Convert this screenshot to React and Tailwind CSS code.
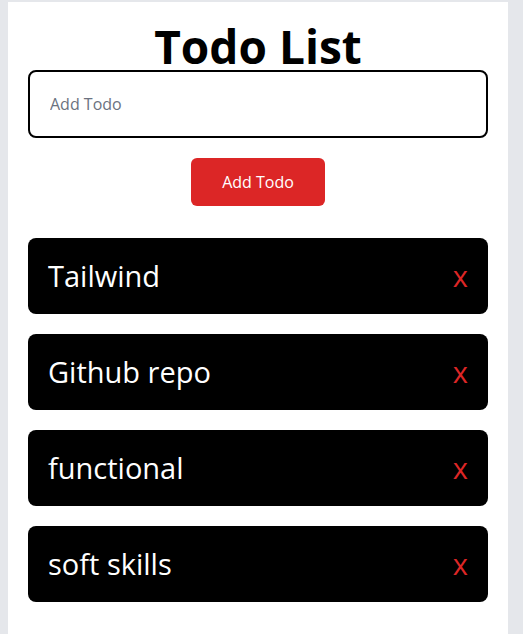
import { useState } from "react";

const initialTodos = ["Tailwind", "Github repo", "functional", "soft skills"];

export default function App() {
  const [todos, setTodos] = useState(initialTodos);
  const [text, setText] = useState("");

  const addTodo = () => {
    if (!text.trim()) return;
    setTodos((prev) => [...prev, text.trim()]);
    setText("");
  };

  const removeTodo = (idx) => {
    setTodos((prev) => prev.filter((_, i) => i !== idx));
  };

  return (
    <div className="min-h-screen bg-[#e5e7eb] pt-0.5 pl-2 font-['Open_Sans',sans-serif]">
      <div className="w-[500px] min-h-[632px] bg-white p-5">
        {/* Header */}
        <h1 className="text-center text-[46px] leading-[48px] font-bold text-black">Todo List</h1>

        {/* Input */}
        <input
          value={text}
          onChange={(e) => setText(e.target.value)}
          placeholder="Add Todo"
          className="block w-full rounded-lg border-2 border-black p-5 text-base leading-6 outline-none placeholder:text-[#6b7280]"
        />

        <div className="mt-5 flex justify-center">
          <button
            onClick={addTodo}
            className="rounded-md bg-[#dc2626] px-[31px] py-3 text-base leading-6 text-white"
          >
            Add Todo
          </button>
        </div>

        {/* List */}
        <ul className="mt-8 flex flex-col gap-5">
          {todos.map((todo, idx) => (
            <li
              key={idx}
              className="flex items-center justify-between rounded-lg bg-black p-5 text-[29px] leading-9 text-white"
            >
              <span>{todo}</span>
              <button onClick={() => removeTodo(idx)} className="text-[#dc2626]">
                x
              </button>
            </li>
          ))}
        </ul>
      </div>
    </div>
  );
}
